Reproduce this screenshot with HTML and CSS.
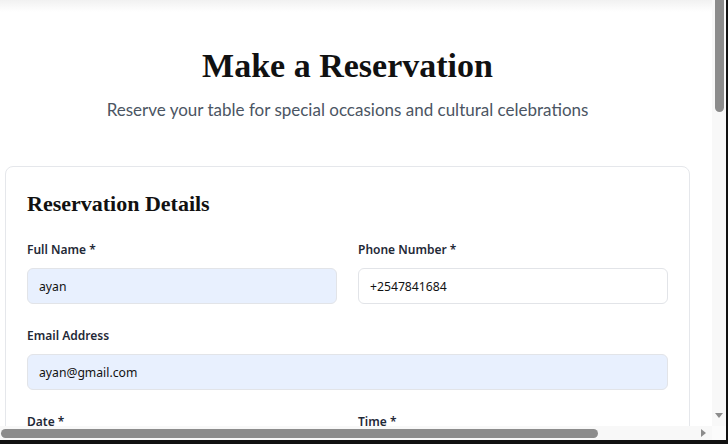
FILE: index.html
```html
<!DOCTYPE html>
<html lang="en">
<head>
<meta charset="utf-8">
<title>Make a Reservation</title>
<link rel="stylesheet" href="styles.css">
</head>
<body>
<div class="topshade"></div>
<main class="container">
  <section class="hero">
    <h1 class="hero-title">Make a Reservation</h1>
    <p class="hero-sub">Reserve your table for special occasions and cultural celebrations</p>
  </section>
  <section class="card">
    <h2 class="card-title">Reservation Details</h2>
    <form class="form">
      <div class="row">
        <div class="field">
          <label class="label">Full Name *</label>
          <div class="input filled">ayan</div>
        </div>
        <div class="field">
          <label class="label">Phone Number *</label>
          <div class="input">+2547841684</div>
        </div>
      </div>
      <div class="field">
        <label class="label">Email Address</label>
        <div class="input filled">ayan@gmail.com</div>
      </div>
      <div class="row">
        <div class="field">
          <label class="label">Date *</label>
          <div class="input">mm/dd/yyyy</div>
        </div>
        <div class="field">
          <label class="label">Time *</label>
          <div class="input">Select time</div>
        </div>
      </div>
      <div class="row">
        <div class="field">
          <label class="label">Number of Guests *</label>
          <div class="input">2 Guests</div>
        </div>
        <div class="field">
          <label class="label">Occasion</label>
          <div class="input">Select occasion</div>
        </div>
      </div>
      <div class="field">
        <label class="label">Special Requests</label>
        <div class="input area">Any dietary restrictions or special requests...</div>
      </div>
      <div class="button">Confirm Reservation</div>
    </form>
  </section>
  <section class="info">
    <div class="info-box">
      <h3 class="info-title">Opening Hours</h3>
      <p class="info-text">Monday – Sunday: 11:00 AM – 11:00 PM</p>
    </div>
    <div class="info-box">
      <h3 class="info-title">Contact</h3>
      <p class="info-text">Call us for group bookings and events</p>
    </div>
  </section>
</main>
<div class="vscroll">
  <div class="vthumb"></div>
  <div class="arrow-down"></div>
</div>
<div class="hscroll">
  <div class="hthumb"></div>
  <div class="arrow-right"></div>
</div>
<div class="corner"></div>
<div class="edge-right"></div>
<div class="edge-bottom"></div>
</body>
</html>
```
FILE: styles.css
```css
html, body {
  margin: 0;
  padding: 0;
  background: #ffffff;
}
body {
  font-family: "Noto Sans", "Open Sans", sans-serif;
  color: #1f2937;
  min-width: 838px;
}
.topshade {
  height: 12px;
  background: linear-gradient(#f1f1f1, #ffffff);
}
.container {
  width: 685px;
  margin-left: 5px;
  padding-bottom: 700px;
}
.hero {
  text-align: center;
  padding-top: 30px;
}
.hero-title {
  margin: 0;
  font-family: "Liberation Serif", serif;
  font-weight: 700;
  font-size: 34px;
  line-height: 48px;
  color: #111111;
}
.hero-sub {
  margin: 8px 0 0;
  font-family: "Lato", sans-serif;
  font-size: 17px;
  line-height: 24px;
  color: #4b5563;
}
.card {
  margin-top: 44px;
  border: 1px solid #e5e7eb;
  border-radius: 8px;
  padding: 21px;
}
.card-title {
  margin: 0 0 20px;
  font-family: "Liberation Serif", serif;
  font-weight: 700;
  font-size: 22px;
  line-height: 32px;
  color: #111111;
}
.form {
  display: flex;
  flex-direction: column;
  gap: 22px;
}
.row {
  display: grid;
  grid-template-columns: 1fr 1fr;
  gap: 21px;
}
.field {
  display: flex;
  flex-direction: column;
  gap: 8px;
}
.label {
  font-size: 12px;
  font-weight: 600;
  line-height: 20px;
  color: #1f2937;
}
.input {
  height: 36px;
  box-sizing: border-box;
  border: 1px solid #e2e4e8;
  border-radius: 6px;
  padding: 0 11px;
  display: flex;
  align-items: center;
  font-size: 12.2px;
  color: #111111;
  background: #ffffff;
}
.input.filled {
  background: #e8f0fe;
}
.input.area {
  height: 96px;
  align-items: flex-start;
  padding-top: 9px;
  color: #9ca3af;
}
.button {
  height: 44px;
  border-radius: 6px;
  background: #b45309;
  color: #ffffff;
  font-weight: 600;
  font-size: 14px;
  display: flex;
  align-items: center;
  justify-content: center;
}
.info {
  margin-top: 32px;
  display: grid;
  grid-template-columns: 1fr 1fr;
  gap: 21px;
}
.info-box {
  border: 1px solid #e5e7eb;
  border-radius: 8px;
  padding: 20px;
}
.info-title {
  margin: 0 0 8px;
  font-family: "Liberation Serif", serif;
  font-size: 18px;
}
.info-text {
  margin: 0;
  font-size: 13px;
  color: #4b5563;
}

/* browser scrollbar overlays */
.vscroll {
  position: fixed;
  left: 712px;
  top: 0;
  width: 14px;
  height: 426px;
  background: #f8f8f8;
}
.vthumb {
  position: absolute;
  left: 3px;
  top: 0;
  width: 9px;
  height: 112px;
  border-radius: 0 0 5px 5px;
  background: #8c8c8c;
}
.arrow-down {
  position: absolute;
  left: 3px;
  top: 413px;
  width: 0;
  height: 0;
  border-left: 4px solid transparent;
  border-right: 4px solid transparent;
  border-top: 5px solid #8c8c8c;
}
.hscroll {
  position: fixed;
  left: 0;
  top: 426px;
  width: 712px;
  height: 14px;
  background: #f8f8f8;
}
.hthumb {
  position: absolute;
  left: 1px;
  top: 3px;
  width: 597px;
  height: 9px;
  border-radius: 5px;
  background: #8c8c8c;
}
.arrow-right {
  position: absolute;
  left: 701px;
  top: 3px;
  width: 0;
  height: 0;
  border-top: 4px solid transparent;
  border-bottom: 4px solid transparent;
  border-left: 5px solid #8c8c8c;
}
.corner {
  position: fixed;
  left: 712px;
  top: 426px;
  width: 14px;
  height: 14px;
  background: #fbfbfb;
}
.edge-right {
  position: fixed;
  left: 726px;
  top: 0;
  width: 2px;
  height: 444px;
  background: #111111;
}
.edge-bottom {
  position: fixed;
  left: 0;
  top: 440px;
  width: 728px;
  height: 4px;
  background: #111111;
}
```
